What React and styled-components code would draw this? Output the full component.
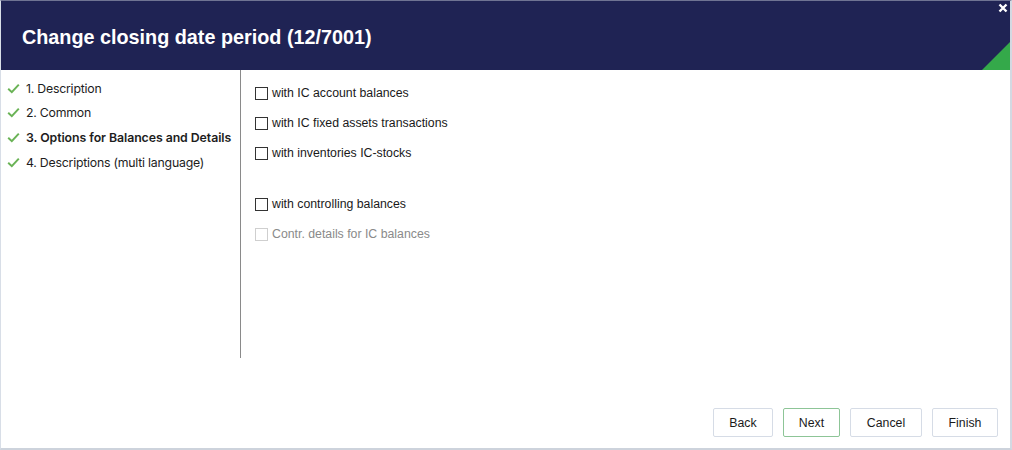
import React, { useState } from 'react';
import styled, { createGlobalStyle } from 'styled-components';

const GlobalStyle = createGlobalStyle`
  html, body {
    margin: 0;
    padding: 0;
    background: #ffffff;
  }
`;

const Window = styled.div`
  position: relative;
  width: 1012px;
  height: 450px;
  box-sizing: border-box;
  display: flex;
  flex-direction: column;
  background: #ffffff;
  border-left: 1px solid #d8dee7;
  border-right: 2px solid #d3d9e2;
  border-bottom: 2px solid #cdd3dc;
  border-top: 1px solid #6f7493;
  overflow: hidden;
`;

const Header = styled.div`
  position: relative;
  height: 69px;
  flex: none;
  background: #1f2354;
  display: flex;
  align-items: center;
  padding-left: 21px;
  padding-top: 3px;
  box-sizing: border-box;
`;

const Title = styled.h1`
  margin: 0;
  font-family: "Liberation Sans", Arial, sans-serif;
  font-weight: bold;
  font-size: 19.8px;
  color: #ffffff;
`;

const CloseButton = styled.button`
  position: absolute;
  top: 2px;
  right: 2px;
  width: 10px;
  height: 10px;
  padding: 0;
  border: none;
  background: transparent;
  cursor: pointer;
  display: flex;
`;

const Corner = styled.div`
  position: absolute;
  right: 0;
  bottom: 0;
  width: 0;
  height: 0;
  border-style: solid;
  border-width: 0 0 28px 28px;
  border-color: transparent transparent #34a94a transparent;
`;

const Main = styled.div`
  display: flex;
  height: 288px;
  flex: none;
`;

const Sidebar = styled.ul`
  width: 239px;
  flex: none;
  margin: 0;
  padding: 6px 0 0 0;
  list-style: none;
  border-right: 1px solid #8a8a8a;
  box-sizing: content-box;
`;

const Step = styled.li`
  display: flex;
  align-items: center;
  height: 24.67px;
  padding-left: 6px;
  font-family: Inter, "Noto Sans", sans-serif;
  font-size: 12.3px;
  font-weight: ${p => (p.$active ? 600 : 400)};
  letter-spacing: ${p => (p.$active ? '-0.06px' : '-0.22px')};
  color: #1d1d1d;
  white-space: nowrap;
`;

const CheckMark = styled.svg`
  width: 13px;
  height: 11px;
  margin-right: 6px;
  flex: none;
`;

const Options = styled.div`
  flex: 1;
  padding: 8px 0 0 14px;
`;

const OptionRow = styled.label`
  display: flex;
  align-items: center;
  height: 30px;
  margin-top: ${p => (p.$spaced ? '21px' : '0')};
  font-family: "Liberation Sans", Arial, sans-serif;
  font-size: 12.3px;
  color: ${p => (p.$disabled ? '#8a8a8a' : '#1a1a1a')};
  cursor: ${p => (p.$disabled ? 'default' : 'pointer')};
`;

const Box = styled.span`
  width: 13px;
  height: 13px;
  box-sizing: border-box;
  border: 1px solid ${p => (p.$disabled ? '#cfcfcf' : '#333333')};
  background: #ffffff;
  margin-right: 4px;
  display: flex;
  align-items: center;
  justify-content: center;
  font-size: 10px;
  line-height: 1;
`;

const Footer = styled.div`
  display: flex;
  justify-content: flex-end;
  gap: 10px;
  padding: 50px 12px 0 0;
`;

const Button = styled.button`
  height: 29px;
  width: ${p => p.$w}px;
  box-sizing: border-box;
  padding: 0;
  background: #ffffff;
  border: 1px solid ${p => (p.$primary ? '#8dc597' : '#d6dce6')};
  border-radius: 2px;
  font-family: "Liberation Sans", Arial, sans-serif;
  font-size: 12.3px;
  color: #1a1a1a;
  cursor: pointer;
`;

const STEPS = [
  '1. Description',
  '2. Common',
  '3. Options for Balances and Details',
  '4. Descriptions (multi language)',
];

const OPTIONS = [
  { label: 'with IC account balances' },
  { label: 'with IC fixed assets transactions' },
  { label: 'with inventories IC-stocks' },
  { label: 'with controlling balances', spaced: true },
  { label: 'Contr. details for IC balances', disabled: true },
];

const App = () => {
  const [checked, setChecked] = useState({});

  const toggle = (i) => setChecked({ ...checked, [i]: !checked[i] });

  return (
    <>
      <GlobalStyle />
      <Window>
        <Header>
          <Title>Change closing date period (12/7001)</Title>
          <CloseButton aria-label="Close">
            <svg width="10" height="10" viewBox="0 0 10 10">
              <path d="M1.5 1.5 L8.5 8.5 M8.5 1.5 L1.5 8.5" stroke="#ffffff" strokeWidth="2.4" />
            </svg>
          </CloseButton>
          <Corner />
        </Header>
        <Main>
          <Sidebar>
            {STEPS.map((step, i) => (
              <Step key={step} $active={i === 2}>
                <CheckMark viewBox="0 0 13 11">
                  <path d="M1.2 5.8 L4.8 9.2 L11.8 1.6" fill="none" stroke="#6ab356" strokeWidth="2" />
                </CheckMark>
                {step}
              </Step>
            ))}
          </Sidebar>
          <Options>
            {OPTIONS.map((opt, i) => (
              <OptionRow
                key={opt.label}
                $spaced={opt.spaced}
                $disabled={opt.disabled}
                onClick={() => !opt.disabled && toggle(i)}
              >
                <Box $disabled={opt.disabled}>{checked[i] ? '✓' : ''}</Box>
                {opt.label}
              </OptionRow>
            ))}
          </Options>
        </Main>
        <Footer>
          <Button $w={60}>Back</Button>
          <Button $w={57} $primary>Next</Button>
          <Button $w={72}>Cancel</Button>
          <Button $w={66}>Finish</Button>
        </Footer>
      </Window>
    </>
  );
};

export default App;
